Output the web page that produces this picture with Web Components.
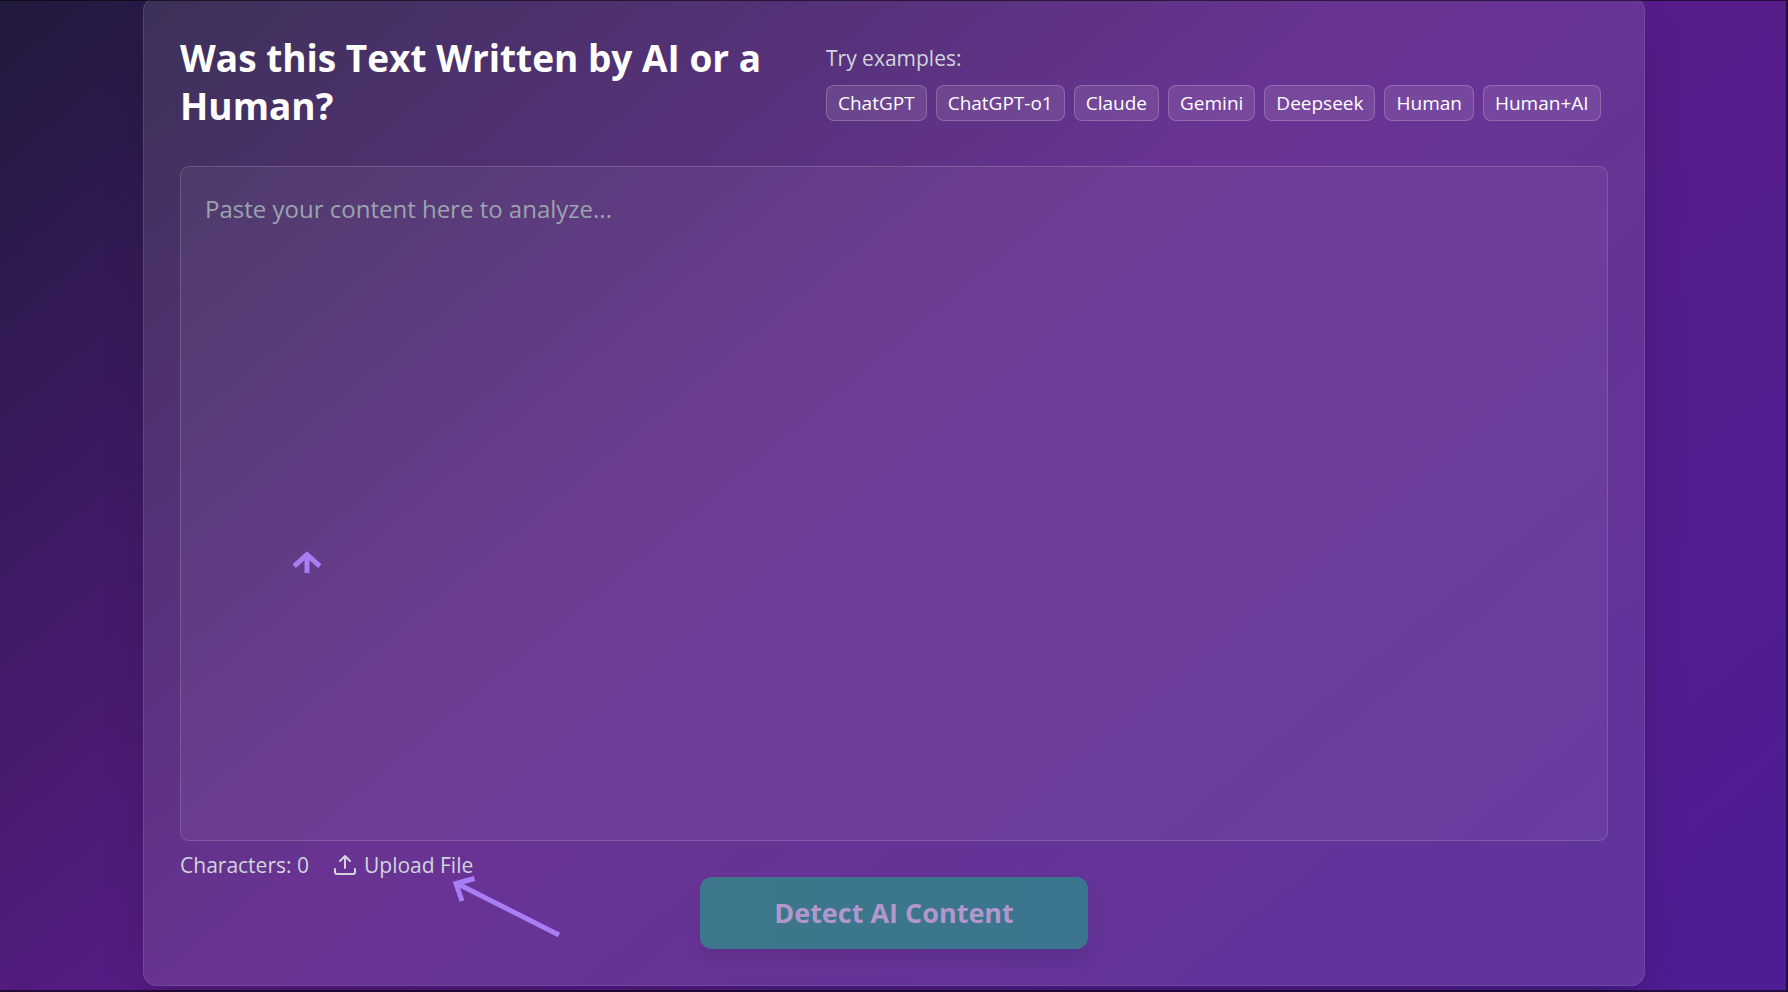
<!DOCTYPE html>
<html lang="en">
<head>
<meta charset="utf-8">
<meta name="viewport" content="width=device-width, initial-scale=1">
<title>AI Content Detector</title>
<style>
body { margin: 0; font-family: "Open Sans", "Noto Sans", sans-serif; }
</style>
</head>
<body>
<detector-page>
  <detector-card>
    <h2 slot="title">Was this Text Written by AI or a Human?</h2>
    <example-list slot="examples">
      <example-chip>ChatGPT</example-chip>
      <example-chip>ChatGPT-o1</example-chip>
      <example-chip>Claude</example-chip>
      <example-chip>Gemini</example-chip>
      <example-chip>Deepseek</example-chip>
      <example-chip>Human</example-chip>
      <example-chip>Human+AI</example-chip>
    </example-list>
    <content-input slot="input"></content-input>
    <input-status slot="status"></input-status>
    <detect-button slot="action">Detect AI Content</detect-button>
  </detector-card>
</detector-page>
<script>
const define = (name, html) => customElements.define(name, class extends HTMLElement {
  constructor() {
    super();
    this.attachShadow({ mode: 'open' }).innerHTML = html;
  }
});

define('detector-page', `
<style>
:host {
  display: block; box-sizing: border-box; min-height: 100vh; padding: 0 8%; overflow: hidden;
  position: relative;
  background: linear-gradient(to bottom right, #111827, #581c87, #4c1d95) 0 70% / 100% 150%;
}
/* dark hairline frame along the window edge */
:host::after {
  content: ""; position: absolute; inset: 0; pointer-events: none;
  border: solid rgba(0, 0, 0, .55); border-width: 1px 2px 2px 0;
}
</style>
<slot></slot>`);

define('detector-card', `
<style>
:host {
  display: block; box-sizing: border-box; margin-top: -3px; padding: 36px;
  border: 1px solid rgba(255, 255, 255, .1); border-radius: 14px;
  background: rgba(255, 255, 255, .1);
  box-shadow: 0 24px 48px -12px rgba(0, 0, 0, .25);
}
header { display: grid; grid-template-columns: minmax(0, 610fr) minmax(0, 782fr); column-gap: 36px; align-items: center; margin-bottom: 36px; }
::slotted(h2) { margin: 0; color: #fff; font-size: 37px; line-height: 48px; font-weight: 700; }
footer { display: flex; flex-direction: column; }
::slotted(detect-button) { align-self: center; }
</style>
<header><slot name="title"></slot><slot name="examples"></slot></header>
<slot name="input"></slot>
<footer><slot name="status"></slot><slot name="action"></slot></footer>`);

define('example-list', `
<style>
:host { display: block; }
p { margin: 0 0 12px; color: #d1d5db; font-size: 21px; line-height: 30px; }
div { display: flex; gap: 9px; }
</style>
<p>Try examples:</p><div><slot></slot></div>`);

define('example-chip', `
<style>
:host { display: block; }
button {
  display: block; box-sizing: border-box; height: 36px; padding: 0 11px;
  border: 1px solid rgba(255, 255, 255, .2); border-radius: 8px;
  background: rgba(255, 255, 255, .1); color: #fff;
  font: 500 19px/32px "Open Sans", "Noto Sans", sans-serif; white-space: nowrap;
}
</style>
<button type="button"><slot></slot></button>`);

define('content-input', `
<style>
:host { display: block; position: relative; }
textarea {
  display: block; box-sizing: border-box; width: 100%; height: 675px; padding: 24px;
  border: 1px solid rgba(255, 255, 255, .15); border-radius: 9px; outline: 0; resize: none;
  background: rgba(255, 255, 255, .05); color: #fff;
  font: 400 24px/36px "Open Sans", "Noto Sans", sans-serif;
}
textarea::placeholder { color: #9ca3af; opacity: 1; }
svg { position: absolute; left: 112px; top: 384px; }
</style>
<textarea aria-label="Content to analyze" placeholder="Paste your content here to analyze..."></textarea>
<svg width="30" height="26" viewBox="0 0 30 26" fill="none" stroke="#a87ef5" aria-hidden="true">
  <path d="M2.2 16.2 15 4.6l12.8 11.6M15 5v18" stroke-width="5"/>
</svg>`);

define('input-status', `
<style>
:host { display: flex; align-items: center; gap: 25px; height: 36px; padding-top: 12px; box-sizing: border-box; color: #d1d5db; font-size: 21px; line-height: 30px; }
.upload { position: relative; }
button { display: flex; align-items: center; gap: 8px; padding: 0; border: 0; background: none; color: inherit; font: inherit; }
.pointer { position: absolute; left: 117px; top: 24px; }
</style>
<span>Characters: 0</span>
<div class="upload">
  <button type="button">
    <svg width="22" height="22" viewBox="0 0 22 22" fill="none" stroke="currentColor" stroke-width="2" stroke-linecap="round" stroke-linejoin="round" aria-hidden="true">
      <path d="M1 15v3a2 2 0 0 0 2 2h16a2 2 0 0 0 2-2v-3M6 7l5-5 5 5M11 2v12"/>
    </svg>
    Upload File
  </button>
  <svg class="pointer" width="112" height="64" viewBox="0 0 112 64" fill="none" stroke="#a87ef5" stroke-width="5" aria-hidden="true">
    <path d="M108 61 7 10M23.500 4.500 5 9.500 11 27"/>
  </svg>
</div>`);

define('detect-button', `
<style>
:host { display: block; }
button {
  display: block; height: 72px; padding: 0 74px; border: 0; border-radius: 12px;
  background: linear-gradient(to right, #3c778b, #3c758f);
  color: #b197cc; font: 700 27px/36px "Open Sans", "Noto Sans", sans-serif;
  box-shadow: 0 12px 18px -4px rgba(0, 0, 0, .1);
}
</style>
<button type="button" disabled><slot></slot></button>`);
</script>
</body>
</html>
